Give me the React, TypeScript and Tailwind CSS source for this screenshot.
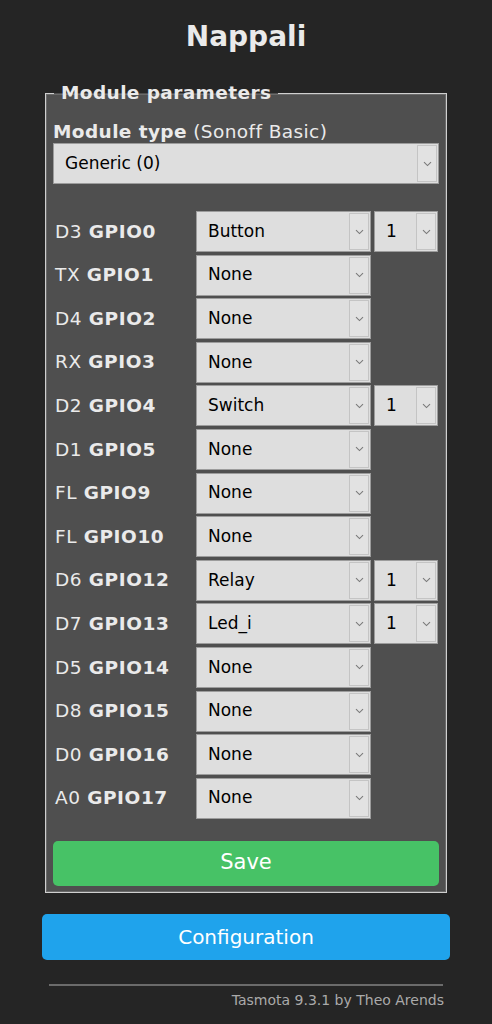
import React from 'react'

const rows = [
  { pin: 'D3', gpio: 'GPIO0', value: 'Button', idx: '1' },
  { pin: 'TX', gpio: 'GPIO1', value: 'None' },
  { pin: 'D4', gpio: 'GPIO2', value: 'None' },
  { pin: 'RX', gpio: 'GPIO3', value: 'None' },
  { pin: 'D2', gpio: 'GPIO4', value: 'Switch', idx: '1' },
  { pin: 'D1', gpio: 'GPIO5', value: 'None' },
  { pin: 'FL', gpio: 'GPIO9', value: 'None' },
  { pin: 'FL', gpio: 'GPIO10', value: 'None' },
  { pin: 'D6', gpio: 'GPIO12', value: 'Relay', idx: '1' },
  { pin: 'D7', gpio: 'GPIO13', value: 'Led_i', idx: '1' },
  { pin: 'D5', gpio: 'GPIO14', value: 'None' },
  { pin: 'D8', gpio: 'GPIO15', value: 'None' },
  { pin: 'D0', gpio: 'GPIO16', value: 'None' },
  { pin: 'A0', gpio: 'GPIO17', value: 'None' },
]

const Chevron = () => (
  <svg width="9" height="6" viewBox="0 0 9 6" fill="none">
    <path d="M1 1.2L4.5 4.6L8 1.2" stroke="#7a7a7a" strokeWidth="1.1" />
  </svg>
)

const Select: React.FC<{ value: string; className?: string }> = ({ value, className }) => (
  <div
    className={`flex h-[41px] items-stretch border border-[#9c9c9c] bg-[#dedede] text-[17px] text-black ${className ?? ''}`}
  >
    <span className="flex flex-1 items-center pl-[11px]">{value}</span>
    <span className="my-px mr-px flex w-[20px] items-center justify-center border border-[#c4c4c4] bg-[#e2e2e2]">
      <Chevron />
    </span>
  </div>
)

export default function App() {
  return (
    <div className="min-h-[1024px] bg-[#252525] font-['DejaVu_Sans',sans-serif] text-[#eaeaea]">
      <div className="mx-auto w-[408px] pt-[20px]">
        <h2 className="text-center text-[28px] font-bold leading-[34px]">Nappali</h2>

        <fieldset className="mx-[3px] mt-[29px] border border-[#cfcfcf] bg-[#4f4f4f] px-[7px] pb-[6px] shadow-[inset_0_0_0_1px_#6a6a6a]">
          <legend className="ml-[1px] px-[7px] text-[18.5px] font-bold leading-[20px] tracking-[0.4px]">
            Module parameters
          </legend>

          <div className="mt-[18px] text-[18.5px] leading-[22px] tracking-[0.4px]">
            <b>Module type</b> (Sonoff Basic)
          </div>
          <Select value="Generic (0)" />

          <div className="mt-[27px] flex flex-col gap-y-[2.6px]">
            {rows.map((r) => (
              <div key={r.gpio} className="flex items-center">
                <div className="w-[143px] pl-[2px] text-[18.5px] tracking-[0.6px]">
                  {r.pin} <b>{r.gpio}</b>
                </div>
                <Select value={r.value} className="w-[175px]" />
                {r.idx && <Select value={r.idx} className="ml-[3px] w-[64px]" />}
              </div>
            ))}
          </div>

          <button className="mt-[22px] h-[45px] w-full rounded-[5px] bg-[#47c266] text-[21px] text-white">
            Save
          </button>
        </fieldset>

        <button className="mt-[21px] h-[46px] w-full rounded-[5px] bg-[#1fa3ec] text-[20px] text-white">
          Configuration
        </button>

        <div className="mx-[7px] mt-[24px] border-t-2 border-[#6b6b6b]" />
        <div className="mr-[6px] mt-[4px] text-right text-[14px] text-[#aaaaaa]">
          Tasmota 9.3.1 by Theo Arends
        </div>
      </div>
    </div>
  )
}
